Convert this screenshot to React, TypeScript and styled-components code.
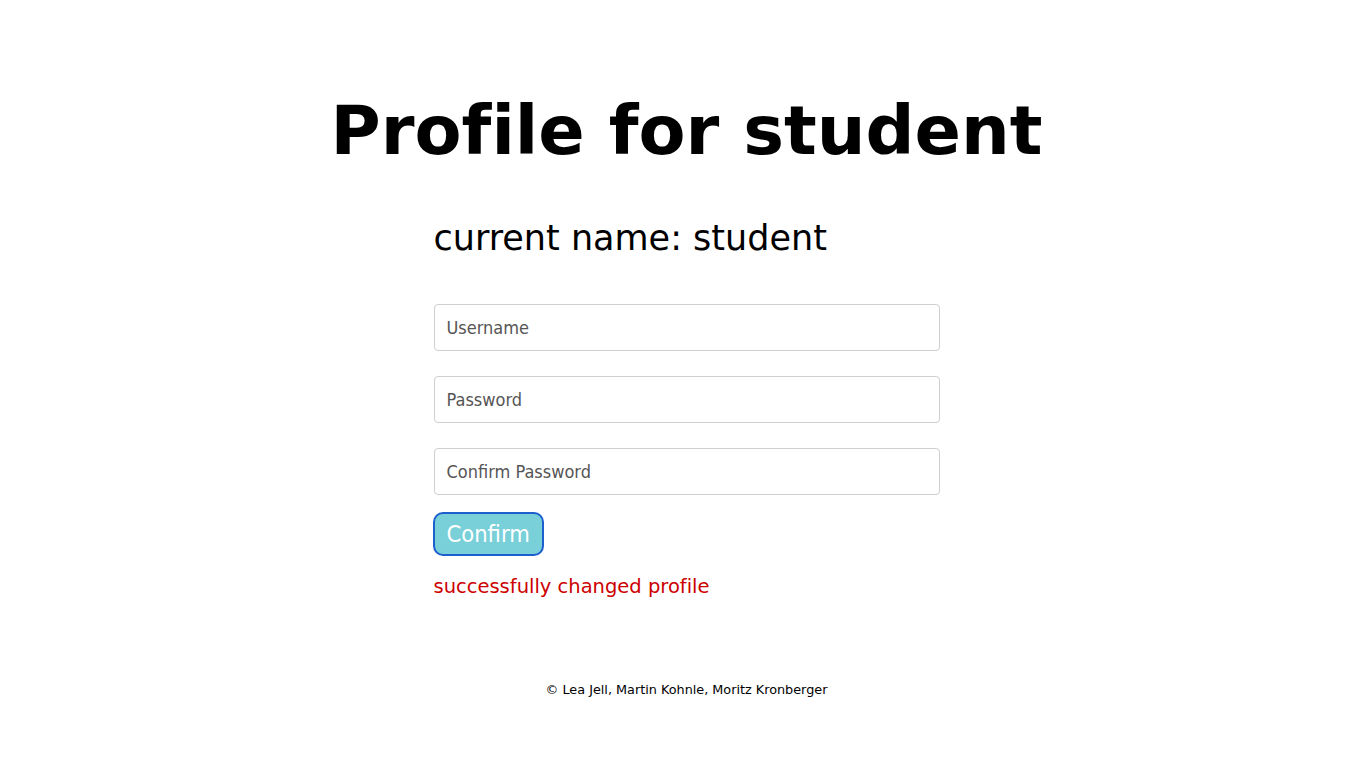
import styled, { createGlobalStyle } from "styled-components";

const GlobalStyle = createGlobalStyle`
    body {
        margin: 0;
        background: #ffffff;
        font-family: "DejaVu Sans", Verdana, sans-serif;
        font-variant-ligatures: none;
    }
`;

const App = () => {
    return (
        <>
            <GlobalStyle />
            <Page>
                <Title>Profile for student</Title>
                <Form>
                    <CurrentName>current name: student</CurrentName>
                    <Fields>
                        <Input type="text" placeholder="Username" />
                        <Input type="password" placeholder="Password" />
                        <Input type="password" placeholder="Confirm Password" />
                    </Fields>
                    <ConfirmButton type="button">Confirm</ConfirmButton>
                    <Message>successfully changed profile</Message>
                </Form>
                <Footer>© Lea Jell, Martin Kohnle, Moritz Kronberger</Footer>
            </Page>
        </>
    );
};

export default App;

const Page = styled.main`
    width: 100%;
    min-height: 768px;
    display: flex;
    flex-direction: column;
    align-items: center;
    padding: 86px 0 0 7px;
    box-sizing: border-box;
`;

const Title = styled.h1`
    margin: 0;
    font-size: 68.5px;
    font-weight: bold;
    line-height: 88px;
    color: #000;
`;

const Form = styled.section`
    width: 506px;
    margin-top: 44px;
    display: flex;
    flex-direction: column;
    align-items: flex-start;
`;

const CurrentName = styled.h2`
    margin: 0;
    font-size: 35px;
    font-weight: normal;
    line-height: 40px;
    color: #000;
`;

const Fields = styled.div`
    width: 100%;
    margin-top: 46px;
    display: flex;
    flex-direction: column;
    gap: 25px;
`;

const Input = styled.input`
    width: 100%;
    height: 47px;
    box-sizing: border-box;
    padding: 0 12px;
    border: 1px solid #cfcfcf;
    border-radius: 4px;
    font-family: "DejaVu Sans Condensed", "DejaVu Sans", sans-serif;
    font-size: 18px;
    color: #333;
    &::placeholder {
        color: #555;
    }
`;

const ConfirmButton = styled.button`
    margin: 17px 0 0 -1px;
    height: 44px;
    padding: 0 12px;
    background: #79d0d9;
    border: 2px solid #1d5fcc;
    border-radius: 10px;
    color: #fff;
    font-family: "DejaVu Sans Condensed", "DejaVu Sans", sans-serif;
    font-size: 23.5px;
    cursor: pointer;
`;

const Message = styled.p`
    margin: 19px 0 0;
    font-size: 19.5px;
    line-height: 24px;
    color: #cc0000;
`;

const Footer = styled.footer`
    margin-top: 83px;
    font-size: 12.8px;
    color: #000;
`;
